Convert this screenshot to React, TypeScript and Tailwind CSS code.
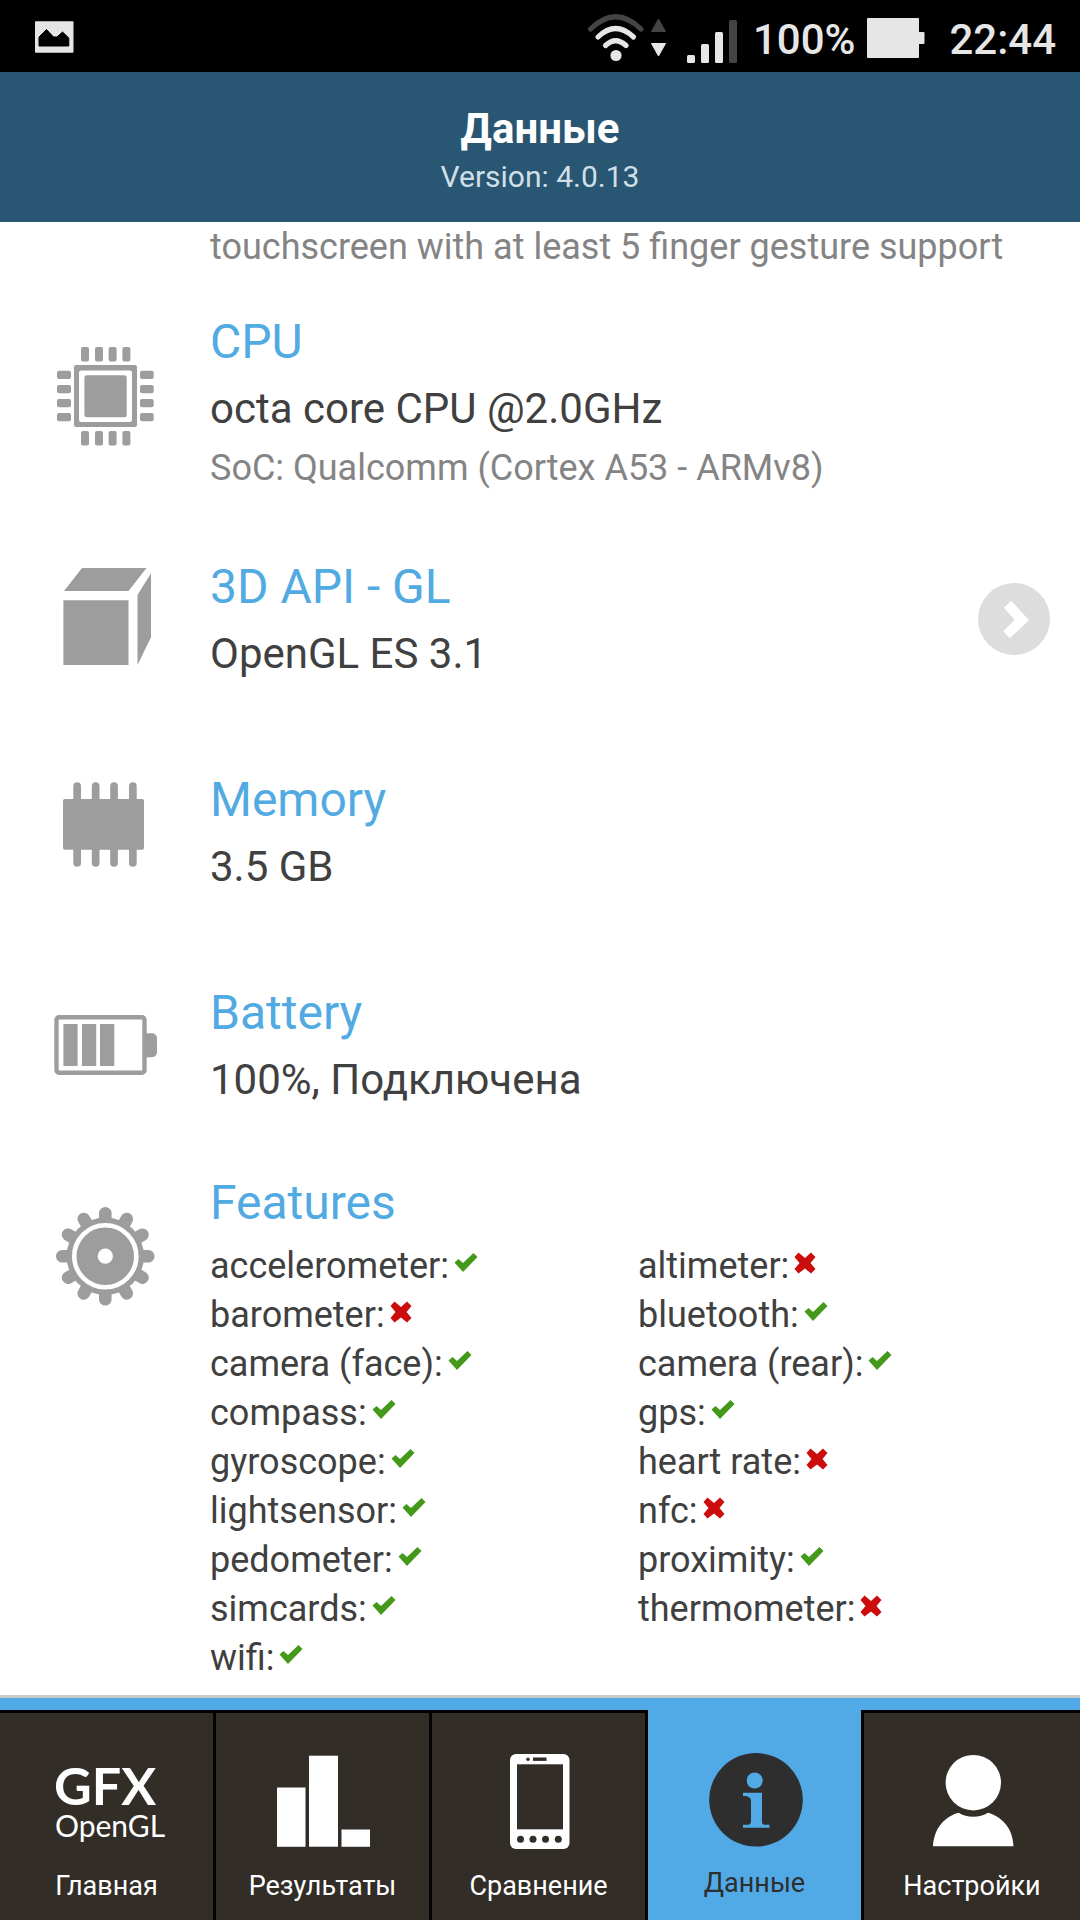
import { useState } from "react";
import type { ReactNode } from "react";

type Feature = {
	name: string;
	available: boolean;
};

type InfoRowProps = {
	icon: ReactNode;
	title: string;
	value: string;
	detail?: string;
	className: string;
	action?: ReactNode;
};

type Tab = {
	id: string;
	label: string;
	icon: ReactNode;
};

const features: Feature[] = [
	{ name: "accelerometer", available: true },
	{ name: "altimeter", available: false },
	{ name: "barometer", available: false },
	{ name: "bluetooth", available: true },
	{ name: "camera (face)", available: true },
	{ name: "camera (rear)", available: true },
	{ name: "compass", available: true },
	{ name: "gps", available: true },
	{ name: "gyroscope", available: true },
	{ name: "heart rate", available: false },
	{ name: "lightsensor", available: true },
	{ name: "nfc", available: false },
	{ name: "pedometer", available: true },
	{ name: "proximity", available: true },
	{ name: "simcards", available: true },
	{ name: "thermometer", available: false },
	{ name: "wifi", available: true },
];

/* ---------- device icons ---------- */

const CpuIcon = () => (
	<svg viewBox="0 1 120 119" className="w-[120px] h-[119px] fill-[#9d9d9d]" aria-hidden="true">
		{[36, 50, 63.6, 77.4].map(x => (
			<g key={x}>
				<rect x={x} y="6" width="8" height="14.5" rx="2" />
				<rect x={x} y="90" width="8" height="14.5" rx="2" />
			</g>
		))}
		{[29.7, 44, 58, 72].map(y => (
			<g key={y}>
				<rect x="12" y={y} width="14" height="8.3" rx="2" />
				<rect x="95" y={y} width="13.7" height="8.3" rx="2" />
			</g>
		))}
		<path fillRule="evenodd" d="M31 24H90a2 2 0 0 1 2 2V84a2 2 0 0 1-2 2H31a2 2 0 0 1-2-2V26a2 2 0 0 1 2-2ZM36 29.5a2 2 0 0 0-2 2V79a2 2 0 0 0 2 2H85a2 2 0 0 0 2-2V31.5a2 2 0 0 0-2-2Z" />
		<rect x="39.4" y="34.3" width="42.3" height="42" rx="2.5" />
	</svg>
);

const CubeIcon = () => (
	<svg viewBox="0 1 120 119" className="w-[120px] h-[119px] fill-[#9d9d9d]" aria-hidden="true">
		<path d="M37 10H101.5L83.5 33H19Z" />
		<path d="M18.4 42.3H83.5V107H18.4Z" />
		<path d="M106 15.3V79.3L92.5 107V37Z" />
	</svg>
);

const MemoryIcon = () => (
	<svg viewBox="0 1 120 119" className="w-[120px] h-[119px] fill-[#9d9d9d]" aria-hidden="true">
		<rect x="18" y="28" width="81" height="50.7" rx="2" />
		{[28.3, 46.8, 65.2, 84].map(x => (
			<rect key={x} x={x} y="11.3" width="7.7" height="84.4" rx="3.8" />
		))}
	</svg>
);

const BatteryIcon = () => (
	<svg viewBox="0 1 120 119" className="w-[120px] h-[119px] fill-[#9d9d9d]" aria-hidden="true">
		<rect x="11.5" y="33.2" width="88" height="55.6" rx="2.5" fill="none" stroke="#9d9d9d" strokeWidth="4.4" />
		<rect x="18.4" y="40" width="14.2" height="42" />
		<rect x="37" y="40" width="14.2" height="42" />
		<rect x="55" y="40" width="14.3" height="42" />
		<path d="M101 49.3H107a5 5 0 0 1 5 5V68.3a5 5 0 0 1-5 5H101Z" />
	</svg>
);

const GearIcon = () => (
	<svg viewBox="0 1 120 120" className="w-[120px] h-[120px] fill-[#9d9d9d]" aria-hidden="true">
		{[0, 30, 60, 90, 120, 150].map(angle => (
			<rect key={angle} x="54" y="11" width="12.6" height="98.5" rx="6.3" transform={`rotate(${angle} 60.3 60.2)`} />
		))}
		<circle cx="60.3" cy="60.2" r="38.7" />
		<circle cx="60.3" cy="60.2" r="31" fill="none" stroke="#fff" strokeWidth="4.6" />
		<circle cx="60.3" cy="60.2" r="7.6" fill="#fff" />
	</svg>
);

const CheckIcon = () => (
	<svg viewBox="0 0 24 24" className="w-6 h-6" role="img" aria-label="yes">
		<path fill="#44991a" d="M.5 10.500L4.500 7L9 11L19.500 1L23.500 5L9 20Z" />
	</svg>
);

const CrossIcon = () => (
	<svg viewBox="0 0 24 24" className="w-6 h-6" role="img" aria-label="no">
		<path fill="#cc0d0d" d="M4.500 .5L11 6L17 .5L21.500 5L16.500 11L21.500 17L17 21.500L11 16.500L4.500 21.500L.5 17L5.500 11L.5 5Z" />
	</svg>
);

/* ---------- tab icons ---------- */

const LogoIcon = () => (
	<svg viewBox="0 0 101 100" className="w-[101px] h-[100px] overflow-visible fill-white font-['Lato',sans-serif]" aria-hidden="true">
		<text>
			<tspan x="-2" y="55" className="text-[52px] font-bold">GFX</tspan>
			<tspan x="-1" y="87" className="text-[30px] font-normal">OpenGL</tspan>
		</text>
	</svg>
);

const BarsIcon = () => (
	<svg viewBox="0 0 101 100" className="w-[101px] h-[100px] fill-white" aria-hidden="true">
		<rect x="5" y="37.5" width="28.5" height="59.3" />
		<rect x="37" y="5.7" width="29" height="91" />
		<rect x="69.5" y="79.5" width="28.5" height="17.3" />
	</svg>
);

const PhoneIcon = () => (
	<svg viewBox="0 0 101 100" className="w-[101px] h-[100px]" aria-hidden="true">
		<rect x="22" y="4" width="59.5" height="95" rx="6" fill="#fff" />
		<g fill="#322d27">
			<rect x="29" y="14.3" width="46" height="65" />
			<circle cx="40" cy="9.2" r="1.7" />
			<rect x="45" y="7.5" width="13.5" height="3.4" />
			<circle cx="32.5" cy="89.3" r="3.5" />
			<circle cx="45" cy="89.3" r="3.5" />
			<circle cx="57.5" cy="89.3" r="3.5" />
			<circle cx="70.3" cy="89.3" r="3.5" />
		</g>
	</svg>
);

const InfoIcon = () => (
	<svg viewBox="0 0 101 100" className="w-[101px] h-[100px]" aria-hidden="true">
		<circle cx="52" cy="52.8" r="46.8" fill="#2e2e2e" />
		<g fill="#51aae5">
			<circle cx="50.7" cy="33.5" r="8" />
			<path d="M39 45.8H58V74.5C58 77 59 77.8 61.5 77.8H65.5V80.8H39V77.8H43C45.5 77.8 47 77 47 74.5V54C47 51 45 49 39 49Z" />
		</g>
	</svg>
);

const PersonIcon = () => (
	<svg viewBox="0 0 101 100" className="w-[101px] h-[100px] fill-white" aria-hidden="true">
		<circle cx="51.3" cy="32.7" r="27.7" />
		<path d="M11 96.3C12 78 23 66.5 36.5 62.8C45 68 57.5 68 66 62.8C79.5 66.5 91 78 91.5 96.3Z" />
	</svg>
);

const tabs: Tab[] = [
	{ id: "home", label: "Главная", icon: <LogoIcon /> },
	{ id: "results", label: "Результаты", icon: <BarsIcon /> },
	{ id: "compare", label: "Сравнение", icon: <PhoneIcon /> },
	{ id: "info", label: "Данные", icon: <InfoIcon /> },
	{ id: "settings", label: "Настройки", icon: <PersonIcon /> },
];

const StatusBar = () => (
	<div className="flex h-[72px] justify-between bg-black pl-[34px] pr-6 text-[#e6e6e6]">
		<svg viewBox="0 0 40 72" className="w-10 h-[72px]" aria-hidden="true">
			<rect x="1" y="21.3" width="38.5" height="31.4" rx="1" fill="#e6e6e6" />
			<path d="M5 46V37L12.5 29.5L19.5 37H23L28.5 32L34.8 38V46Z" stroke="#000" strokeLinejoin="round" />
		</svg>
		<div className="flex">
			<svg viewBox="0 0 80 72" className="w-20 h-[72px]" aria-hidden="true">
				<g fill="none" strokeLinecap="round" strokeWidth="5.2">
					<path d="M3.5 29Q28.5 4.5 54 29" stroke="#444" />
					<path d="M11 37Q28.5 20 46.5 37" stroke="#e6e6e6" />
					<path d="M18.5 45.5Q28.5 36 39 45.5" stroke="#e6e6e6" />
				</g>
				<circle cx="29" cy="55.5" r="5.6" fill="#e6e6e6" />
				<path d="M71.5 19L78.5 31.5H64.5Z" fill="#444" stroke="#444" strokeLinejoin="round" />
				<path d="M71.5 56L78.5 43.5H64.5Z" fill="#e6e6e6" stroke="#e6e6e6" strokeLinejoin="round" />
			</svg>
			<svg viewBox="0 0 52 72" className="ml-5 w-[52px] h-[72px] fill-[#e6e6e6]" aria-hidden="true">
				<rect y="55" width="8" height="8" rx="1.5" />
				<rect x="14" y="44" width="8" height="19" rx="1.5" />
				<rect x="28" y="32" width="8" height="31" rx="1.5" />
				<rect x="42" y="20" width="8" height="43" rx="1.5" fill="#444" />
			</svg>
			<span className="ml-[14px] pt-2 text-[42px] leading-[64px] font-medium">100%</span>
			<svg viewBox="0 0 58 72" className="ml-3 w-[58px] h-[72px] fill-[#e6e6e6]" aria-hidden="true">
				<rect y="18" width="52" height="40" rx="1" />
				<rect x="51" y="32" width="6.5" height="12" rx="1" />
			</svg>
			<span className="ml-6 pt-2 text-[42px] leading-[64px] font-medium">22:44</span>
		</div>
	</div>
);

const InfoRow = ({ icon, title, value, detail, className, action }: InfoRowProps) => (
	<section className={"flex items-center pl-[45px] pr-[30px] " + className}>
		{icon}
		<div className="ml-[45px] flex flex-1 flex-col gap-[14px]">
			<h2 className="text-[48px] leading-[56px] text-[#52aae2]">{title}</h2>
			<p className="text-[42px] leading-[49px]">{value}</p>
			{detail && <p className="text-4xl leading-[42px] text-[#848484]">{detail}</p>}
		</div>
		{action}
	</section>
);

const MoreButton = () => (
	<button type="button" aria-label="3D API - GL">
		<svg viewBox="0 0 72 72" className="w-[72px] h-[72px]" aria-hidden="true">
			<circle cx="36" cy="36" r="36" fill="#ddd" />
			<path d="M26 24.7L33.3 17.7L51 37.3L31.7 55.3L25.3 48L36.7 37Z" fill="#fff" />
		</svg>
	</button>
);

const App = () => {
	const [activeTab, setActiveTab] = useState("info");

	return (
		<div className="flex min-h-screen flex-col bg-white font-['Roboto',sans-serif] text-[#404040]">
			<StatusBar />
			<header className="flex h-[150px] flex-col items-center gap-[6px] bg-[#295672] pt-8">
				<h1 className="text-[42px] leading-[49px] font-bold text-white">Данные</h1>
				<p className="text-3xl leading-[35px] text-[#d0dfe8]">Version: 4.0.13</p>
			</header>
			<main className="flex-1 pt-1">
				<p className="pl-[210px] pb-[46px] text-4xl leading-[42px] text-[#848484]">
					touchscreen with at least 5 finger gesture support
				</p>
				<InfoRow
					icon={<CpuIcon />}
					title="CPU"
					value="octa core CPU @2.0GHz"
					detail="SoC: Qualcomm (Cortex A53 - ARMv8)"
					className="pb-[70px]"
				/>
				<InfoRow icon={<CubeIcon />} title="3D API - GL" value="OpenGL ES 3.1" className="pb-[94px]" action={<MoreButton />} />
				<InfoRow icon={<MemoryIcon />} title="Memory" value="3.5 GB" className="pb-[94px]" />
				<InfoRow icon={<BatteryIcon />} title="Battery" value="100%, Подключена" className="pb-[71px]" />
				<section className="flex items-start pl-[45px] pr-[14px]">
					<div className="pt-[22px]">
						<GearIcon />
					</div>
					<div className="ml-[45px] flex-1">
						<h2 className="text-[48px] leading-[56px] text-[#52aae2]">Features</h2>
						<ul className="mt-[11px] grid grid-cols-2">
							{features.map(feature => (
								<li key={feature.name} className="flex gap-[5px] text-4xl leading-[49px]">
									{feature.name}:
									<span className="pt-[10px]">{feature.available ? <CheckIcon /> : <CrossIcon />}</span>
								</li>
							))}
						</ul>
					</div>
				</section>
			</main>
			<nav className="grid grid-cols-5 border-t-3 border-[#c9cac6] bg-[#51aae5] pt-3">
				{tabs.map(tab => (
					<button
						key={tab.id}
						type="button"
						onClick={() => setActiveTab(tab.id)}
						className={
							"flex h-[210px] flex-col items-center gap-5 border-black pt-[37px] text-[27px] leading-8 not-last:border-r-3 " +
							(tab.id === activeTab ? "text-[#2e2e2e]" : "border-t-3 bg-[#322d27] text-white")
						}>
						{tab.icon}
						{tab.label}
					</button>
				))}
			</nav>
		</div>
	);
};

export default App;
